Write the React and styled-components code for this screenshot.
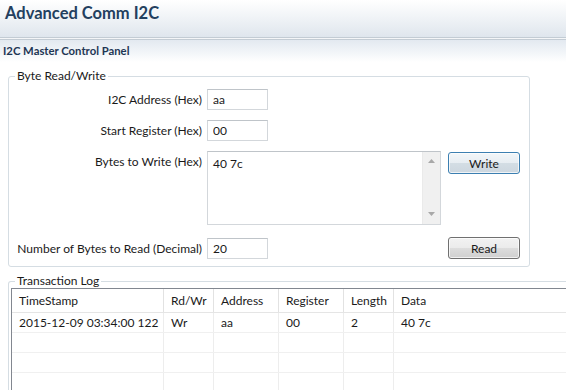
import styled, { createGlobalStyle } from "styled-components";

const GlobalStyle = createGlobalStyle`
  html, body {
    margin: 0;
    padding: 0;
    background: #ffffff;
    overflow: hidden;
  }
  body {
    font-family: "Lato", "Open Sans", sans-serif;
    font-size: 12px;
    color: #1a1a1a;
  }
`;

const columns = [
  { key: "time", title: "TimeStamp", width: 152 },
  { key: "dir", title: "Rd/Wr", width: 50 },
  { key: "addr", title: "Address", width: 65 },
  { key: "reg", title: "Register", width: 65 },
  { key: "len", title: "Length", width: 50 },
  { key: "data", title: "Data", width: 220 },
];

const rows = [
  { time: "2015-12-09 03:34:00 122", dir: "Wr", addr: "aa", reg: "00", len: "2", data: "40 7c" },
  {},
  {},
  {},
];

const App = () => {
  return (
    <Page>
      <GlobalStyle />
      <TitleBar>Advanced Comm I2C</TitleBar>
      <DoubleRule />
      <SectionBar>I2C Master Control Panel</SectionBar>

      <Group>
        <Legend $shift={-2}>Byte Read/Write</Legend>
        <FormGrid>
          <Label>I2C Address (Hex)</Label>
          <TextInput defaultValue="aa" />
          <span />

          <Label>Start Register (Hex)</Label>
          <TextInput defaultValue="00" />
          <span />

          <Label>Bytes to Write (Hex)</Label>
          <AreaBox>
            <AreaText defaultValue="40 7c" />
            <ScrollTrack>
              <svg width="7" height="4" viewBox="0 0 7 4">
                <path d="M0 4 L3.5 0 L7 4 Z" fill="#a8a8a8" />
              </svg>
              <svg width="7" height="4" viewBox="0 0 7 4">
                <path d="M0 0 L3.5 4 L7 0 Z" fill="#a8a8a8" />
              </svg>
            </ScrollTrack>
          </AreaBox>
          <PushButton $focused>Write</PushButton>

          <Label $last>Number of Bytes to Read (Decimal)</Label>
          <TextInput defaultValue="20" $last />
          <PushButton $last>Read</PushButton>
        </FormGrid>
      </Group>

      <LogGroup>
        <Legend $shift={4}>Transaction Log</Legend>
        <LogTable>
          <HeadRow>
            {columns.map((c) => (
              <HeadCell key={c.key} style={{ width: c.width }}>{c.title}</HeadCell>
            ))}
          </HeadRow>
          {rows.map((r, i) => (
            <BodyRow key={i}>
              {columns.map((c) => (
                <BodyCell key={c.key} style={{ width: c.width }}>{r[c.key] || ""}</BodyCell>
              ))}
            </BodyRow>
          ))}
        </LogTable>
      </LogGroup>
    </Page>
  );
};

export default App;

const Page = styled.div`
  width: 566px;
  height: 390px;
  overflow: hidden;
`;

const TitleBar = styled.div`
  height: 37px;
  box-sizing: border-box;
  padding: 3px 0 0 5px;
  font-size: 16.5px;
  font-weight: 700;
  color: #23405f;
  line-height: 20px;
  background: linear-gradient(to bottom, #ffffff 0%, #f1f4f7 45%, #dfe6ed 100%);
`;

const DoubleRule = styled.div`
  height: 1px;
  border-top: 1px solid #c3ccd4;
  border-bottom: 1px solid #c3ccd4;
  background: #f4f6f8;
`;

const SectionBar = styled.div`
  height: 22px;
  box-sizing: border-box;
  padding: 3px 0 0 3px;
  font-size: 11.3px;
  font-weight: 700;
  color: #1e3654;
  line-height: 16px;
  background: linear-gradient(to bottom, #e3e9f0 0%, #f3f6f9 60%, #ffffff 100%);
`;

const Group = styled.fieldset`
  margin: 7px 0 0 8px;
  width: 522px;
  box-sizing: border-box;
  padding: 6px 7px 7px 8px;
  border: 1px solid #d5dde3;
  border-radius: 3px;
  min-width: 0;
`;

const LogGroup = styled(Group)`
  margin-top: 7px;
  width: 640px;
  padding: 0 0 0 2px;
  border-bottom: none;
`;

const Legend = styled.legend`
  margin-left: ${(p) => p.$shift}px;
  padding: 0 2px;
  line-height: 14px;
  font-size: 12px;
  color: #1a1a1a;
`;

const FormGrid = styled.div`
  display: grid;
  grid-template-columns: 190px 241px 72px;
  grid-template-rows: 21px 21px 74px 24px;
  row-gap: 10px;
`;

const Label = styled.div`
  text-align: right;
  padding-right: 5px;
  line-height: 21px;
  white-space: nowrap;
  margin-top: ${(p) => (p.$last ? "3px" : "0")};
`;

const TextInput = styled.input`
  width: 61px;
  height: 21px;
  box-sizing: border-box;
  border: 1px solid #d3d7db;
  border-top-color: #bfc4c9;
  padding: 0 5px;
  font-family: inherit;
  font-size: 12px;
  color: #1a1a1a;
  outline: none;
  margin-top: ${(p) => (p.$last ? "3px" : "0")};
`;

const AreaBox = styled.div`
  width: 234px;
  height: 74px;
  box-sizing: border-box;
  border: 1px solid #d3d7db;
  border-top-color: #bfc4c9;
  display: flex;
`;

const AreaText = styled.textarea`
  flex: 1;
  border: none;
  resize: none;
  outline: none;
  padding: 4px 5px;
  font-family: inherit;
  font-size: 12px;
  line-height: 15px;
  color: #1a1a1a;
  overflow: hidden;
`;

const ScrollTrack = styled.div`
  width: 17px;
  background: #f0f0f0;
  border-left: 1px solid #eaeaea;
  display: flex;
  flex-direction: column;
  justify-content: space-between;
  align-items: center;
  padding: 7px 0 8px;
`;

const PushButton = styled.button`
  width: 72px;
  height: 22px;
  margin-top: ${(p) => (p.$last ? "2px" : "1px")};
  align-self: start;
  box-sizing: border-box;
  border: 1px solid ${(p) => (p.$focused ? "#3c7fb1" : "#707070")};
  border-radius: 3px;
  background: ${(p) =>
    p.$focused
      ? "linear-gradient(to bottom, #f2f6f9 0%, #e7edf2 50%, #d3dde4 51%, #cdd7df 100%)"
      : "linear-gradient(to bottom, #f2f2f2 0%, #ebebeb 50%, #dddddd 51%, #cfcfcf 100%)"};
  box-shadow: inset 0 0 0 1px rgba(255, 255, 255, 0.7);
  font-family: inherit;
  font-size: 12px;
  color: #1a1a1a;
  padding: 0;
`;

const LogTable = styled.div`
  border-left: 1px solid #828790;
  border-top: 1px solid #828790;
`;

const HeadRow = styled.div`
  display: flex;
  height: 23px;
  border-bottom: 1px solid #e5e5e5;
`;

const HeadCell = styled.div`
  box-sizing: border-box;
  padding: 0 6px 0 7px;
  line-height: 23px;
  border-right: 1px solid #e2e2e2;
  white-space: nowrap;
`;

const BodyRow = styled.div`
  display: flex;
  height: 19px;
  border-bottom: 1px solid #f0f0f0;
`;

const BodyCell = styled.div`
  box-sizing: border-box;
  padding: 0 6px 0 7px;
  line-height: 19px;
  border-right: 1px solid #ededed;
  white-space: nowrap;
`;
